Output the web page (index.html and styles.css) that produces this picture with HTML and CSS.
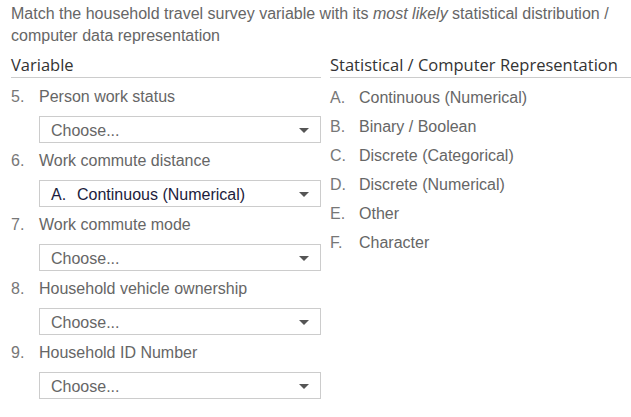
FILE: index.html
```html
<!DOCTYPE html>
<html>
<head>
<meta charset="utf-8">
<link rel="stylesheet" href="styles.css">
</head>
<body>
<div class="page">
  <p class="intro">Match the household travel survey variable with its <em>most likely</em> statistical distribution / computer data representation</p>
  <div class="cols">
    <div class="col left">
      <div class="head">Variable</div>
      <ol class="vars">
        <li class="var">
          <div class="label"><span class="num">5.</span><span>Person work status</span></div>
          <div class="select"><span class="ph">Choose...</span><span class="caret"></span></div>
        </li>
        <li class="var">
          <div class="label"><span class="num">6.</span><span>Work commute distance</span></div>
          <div class="select chosen"><span class="opt"><span class="optnum">A.</span>Continuous (Numerical)</span><span class="caret"></span></div>
        </li>
        <li class="var">
          <div class="label"><span class="num">7.</span><span>Work commute mode</span></div>
          <div class="select"><span class="ph">Choose...</span><span class="caret"></span></div>
        </li>
        <li class="var">
          <div class="label"><span class="num">8.</span><span>Household vehicle ownership</span></div>
          <div class="select"><span class="ph">Choose...</span><span class="caret"></span></div>
        </li>
        <li class="var">
          <div class="label"><span class="num">9.</span><span>Household ID Number</span></div>
          <div class="select"><span class="ph">Choose...</span><span class="caret"></span></div>
        </li>
      </ol>
    </div>
    <div class="col right">
      <div class="head">Statistical / Computer Representation</div>
      <ol class="answers">
        <li><span class="num">A.</span><span>Continuous (Numerical)</span></li>
        <li><span class="num">B.</span><span>Binary / Boolean</span></li>
        <li><span class="num">C.</span><span>Discrete (Categorical)</span></li>
        <li><span class="num">D.</span><span>Discrete (Numerical)</span></li>
        <li><span class="num">E.</span><span>Other</span></li>
        <li><span class="num">F.</span><span>Character</span></li>
      </ol>
    </div>
  </div>
</div>
</body>
</html>
```

FILE: styles.css
```css
html, body {
  margin: 0;
  padding: 0;
  background: #fff;
}
body {
  font-family: "Liberation Sans", Arial, sans-serif;
  font-size: 16px;
  color: #666;
}
.page {
  padding: 3px 0 0 11px;
}
.intro {
  margin: 0;
  line-height: 22px;
  color: #666;
  padding-right: 10px;
}
.intro em {
  font-style: italic;
}
.cols {
  display: grid;
  grid-template-columns: 310px 1fr;
  column-gap: 9px;
  margin-top: 8px;
}
.head {
  font-family: "Open Sans", "Liberation Sans", sans-serif;
  font-size: 16.5px;
  font-weight: 500;
  color: #333;
  line-height: 20px;
  padding-bottom: 2px;
  border-bottom: 1px solid #ccc;
}
ol {
  list-style: none;
  margin: 0;
  padding: 0;
}
.vars {
  padding-top: 7px;
}
.var {
  padding-bottom: 6px;
}
.label {
  display: flex;
  height: 24px;
  align-items: center;
  margin-bottom: 7px;
}
.num {
  width: 28px;
  flex: none;
  color: #777;
}
.select {
  margin-left: 28px;
  height: 25px;
  border: 1px solid #ccc;
  display: flex;
  align-items: center;
  justify-content: space-between;
  padding: 0 11px 0 11px;
  box-sizing: content-box;
  width: 258px;
}
.ph {
  color: #666;
  padding-top: 2px;
}
.opt {
  color: #1c1c3c;
  display: flex;
  padding-top: 2px;
}
.optnum {
  width: 26px;
}
.caret {
  width: 0;
  height: 0;
  border-left: 5px solid transparent;
  border-right: 5px solid transparent;
  border-top: 5px solid #555;
  margin-top: 1px;
}
.answers {
  padding-top: 5px;
}
.answers li {
  display: flex;
  height: 29px;
  align-items: center;
}
.answers .num {
  width: 29px;
}
```
